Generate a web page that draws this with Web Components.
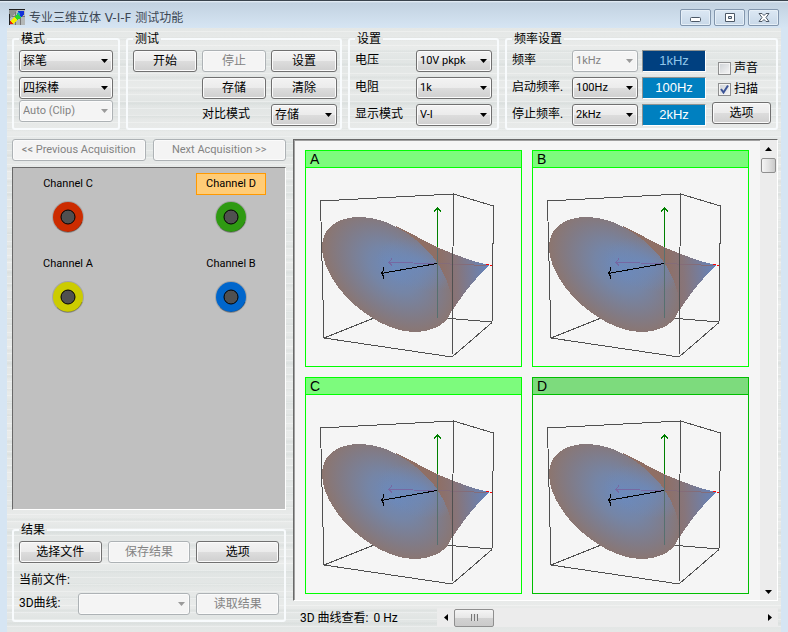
<!DOCTYPE html>
<html lang="zh-CN">
<head>
<meta charset="utf-8">
<title>专业三维立体 V-I-F 测试功能</title>
<style>
  body {
    margin: 0;
    font: 12px/16px Roboto, "Noto Sans CJK SC", sans-serif;
    color: #000;
    background: #d6e5f3;
  }

  .toolbar {
    display: grid;
    grid-template-columns: 108px 216px 151px 1fr;
    gap: 6px;
  }

  .stack { display: grid; row-gap: 5px; align-content: start; }
  .probe { --combo-font: 12px; }
  .probe > :last-child { --combo-font: 11px; margin-top: -4px; }

  .tests {
    display: grid;
    grid-template-columns: 64px 64px 66px;
    gap: 5px;
  }
  .tests .wide { grid-column: 2 / 4; --combo-font: 12px; }
  .tests .mid { grid-column: 2; }

  .freq {
    display: grid;
    grid-template-columns: 126px 64px 1fr;
    column-gap: 4px;
  }
  .extras {
    display: flex;
    flex-direction: column;
    padding: 10px 0 0 2px;
    gap: 5px;
  }

  .work {
    display: grid;
    grid-template-columns: 274px 1fr;
    gap: 7px;
    padding-top: 9px;
  }
  .side { display: flex; flex-direction: column; }
  .pager {
    display: grid;
    grid-template-columns: 1fr 1fr;
    gap: 7px;
    margin-bottom: 6px;
    font-size: 11px;
  }
  .side probe-board { margin-bottom: 12px; }

  .results { display: grid; grid-template-columns: repeat(3, 1fr); column-gap: 6px; padding-bottom: 3px; }
  .results .file { grid-column: 1 / 4; padding: 9px 0 5px; }
  .results .curve { grid-column: 1 / 3; }
</style>
</head>
<body>

<app-window caption="专业三维立体 V-I-F 测试功能">
  <div class="toolbar">
    <group-box caption="模式">
      <div class="stack probe">
        <combo-field name="探笔" value="探笔"></combo-field>
        <combo-field name="探棒" value="四探棒"></combo-field>
        <combo-field name="Auto" value="Auto (Clip)" disabled></combo-field>
      </div>
    </group-box>

    <group-box caption="测试">
      <div class="tests">
        <push-button>开始</push-button>
        <push-button disabled>停止</push-button>
        <push-button>设置</push-button>
        <push-button class="mid">存储</push-button>
        <push-button>清除</push-button>
        <combo-field class="wide" label="对比模式" value="存储" style="--combo: 66px"></combo-field>
      </div>
    </group-box>

    <group-box caption="设置">
      <div class="stack">
        <combo-field label="电压" value="10V pkpk" style="--combo: 76px"></combo-field>
        <combo-field label="电阻" value="1k" style="--combo: 76px"></combo-field>
        <combo-field label="显示模式" value="V-I" style="--combo: 76px"></combo-field>
      </div>
    </group-box>

    <group-box caption="频率设置">
      <div class="freq">
        <div class="stack">
          <combo-field label="频率" value="1kHz" style="--combo: 66px" disabled></combo-field>
          <combo-field label="启动频率." value="100Hz" style="--combo: 66px"></combo-field>
          <combo-field label="停止频率." value="2kHz" style="--combo: 66px"></combo-field>
        </div>
        <div class="stack">
          <freq-display dim>1kHz</freq-display>
          <freq-display>100Hz</freq-display>
          <freq-display>2kHz</freq-display>
        </div>
        <div class="extras">
          <check-field label="声音"></check-field>
          <check-field label="扫描" checked></check-field>
          <push-button>选项</push-button>
        </div>
      </div>
    </group-box>
  </div>

  <div class="work">
    <div class="side">
      <div class="pager">
        <push-button disabled>&lt;&lt; Previous Acquisition</push-button>
        <push-button disabled>Next Acquisition &gt;&gt;</push-button>
      </div>
      <probe-board>
        <probe-socket label="Channel C" style="--ring: #cc2c00"></probe-socket>
        <probe-socket label="Channel D" style="--ring: #2f9a12" active></probe-socket>
        <probe-socket label="Channel A" style="--ring: #cccc00"></probe-socket>
        <probe-socket label="Channel B" style="--ring: #0066cc"></probe-socket>
      </probe-board>
      <group-box caption="结果">
        <div class="results">
          <push-button>选择文件</push-button>
          <push-button disabled>保存结果</push-button>
          <push-button>选项</push-button>
          <div class="file">当前文件:</div>
          <combo-field class="curve" label="3D曲线:" value="" style="--combo: 112px" disabled></combo-field>
          <push-button disabled>读取结果</push-button>
        </div>
      </group-box>
    </div>

    <plot-viewer>
      <plot-card name="A"></plot-card>
      <plot-card name="B"></plot-card>
      <plot-card name="C"></plot-card>
      <plot-card name="D" active></plot-card>
    </plot-viewer>
  </div>
</app-window>

<script>
// Small base: attaches an open root and fills it from render()
class UiElement extends HTMLElement {
  constructor() {
    super();
    this.attachShadow({ mode: "open" });
  }

  connectedCallback() {
    this.shadowRoot.innerHTML = this.render();
  }

  attr(name) {
    return this.getAttribute(name) || "";
  }
}

class AppWindow extends UiElement {
  render() {
    return `
      <style>
        :host {
          display: flex;
          flex-direction: column;
          min-height: 100vh;
          box-sizing: border-box;
          padding: 0 7px;
          background: linear-gradient(#39434d 0, #39434d 1px, #eaf2f9 1px, #c2d2e1 3px, #d6e5f3 28px);
        }
        header {
          display: flex;
          align-items: flex-start;
          height: 28px;
        }
        .logo { margin: 9px 4px 0 2px; }
        h1 {
          flex: 1;
          margin: 9px 0 0;
          font: 12px/18px "DejaVu Sans", "Noto Sans CJK SC", sans-serif;
          color: #3b4653;
        }
        nav { display: flex; gap: 3px; padding: 9px 2px 0 0; }
        nav button {
          width: 31px;
          height: 17px;
          padding: 0;
          border: 1px solid #8296ad;
          border-radius: 2px;
          background: linear-gradient(#dce8f4, #c8d8e8);
          box-shadow: inset 0 0 0 1px #e6eff7;
        }
        nav svg { display: block; margin: auto; }
        main {
          flex: 1;
          padding: 3px 3px 0 5px;
          background:
            repeating-linear-gradient(rgba(255,255,255,0) 0 3px, rgba(255,255,255,.3) 3px 4px, rgba(255,255,255,0) 4px 7px),
            repeating-linear-gradient(rgba(190,200,198,0) 0 9px, rgba(190,200,198,.22) 10px, rgba(190,200,198,0) 13px),
            repeating-linear-gradient(#e4e7e6 0, #e9ebea 19px, #e1e5e4 31px, #e4e7e6 43px);
        }
      </style>
      <header>
        <svg class="logo" width="16" height="16" shape-rendering="crispEdges">
          <rect width="16" height="16" fill="#b4b8b8"/>
          <path d="M0 .5H16M.5 0V16" stroke="#222"/>
          <path d="M6.500 1V16M1 7.500H16M11.500 8V16" stroke="#777"/>
          <path d="M0 1H8L4 7L1 9Z" fill="#8d9191"/>
          <path d="M1 12H4V15H1Z" fill="#e02010"/>
          <path d="M2 12L5 8L9 8L8 11L4 15Z" fill="#f5ee00"/>
          <path d="M5 8L8 5L13 7L10 10L8 11Z" fill="#2bd42e"/>
          <path d="M8 5L10 2L13 6L12 8Z" fill="#16a8b8"/>
          <path d="M9 2H15V5L12 8L11 5Z" fill="#1230d8"/>
        </svg>
        <h1>${this.attr("caption")}</h1>
        <nav>
          <button aria-label="Minimize">
            <svg width="12" height="11"><rect x=".5" y="5.500" width="10" height="4" rx="1" fill="#fff" stroke="#4c5866"/></svg>
          </button>
          <button aria-label="Restore">
            <svg width="12" height="11"><path fill="#fff" fill-rule="evenodd" stroke="#4c5866" d="M1.500 1.500h9v8h-9zM4.500 4.500h3v2h-3z"/></svg>
          </button>
          <button aria-label="Close">
            <svg width="12" height="11"><path fill="#fff" stroke="#4c5866" d="M1 1.500H4L6 3.500L8 1.500H11L8 5.500L11 9.500H8L6 7.500L4 9.500H1L4 5.500Z"/></svg>
          </button>
        </nav>
      </header>
      <main><slot></slot></main>
    `;
  }
}

class GroupBox extends UiElement {
  render() {
    return `
      <style>
        :host { display: block; }
        fieldset {
          min-width: 0;
          margin: 0;
          padding: 3px 5px 2px;
          border: 2px solid #f8fbfd;
          border-radius: 3px;
          box-sizing: border-box;
          height: 100%;
        }
        legend { padding: 0 2px; line-height: 16px; }
      </style>
      <fieldset>
        <legend>${this.attr("caption")}</legend>
        <slot></slot>
      </fieldset>
    `;
  }
}

class PushButton extends UiElement {
  render() {
    return `
      <style>
        :host { display: block; }
        button {
          display: block;
          width: 100%;
          height: 22px;
          padding: 0;
          border: 1px solid #707070;
          border-radius: 3px;
          background: linear-gradient(#f3f3f3, #ebebeb 50%, #dddddd 50%, #cfcfcf);
          box-shadow: inset 0 0 0 1px #fbfbfb;
          font: inherit;
          line-height: 18px;
          white-space: nowrap;
          color: #000;
        }
        button:disabled {
          border-color: #adb2b5;
          background: #f4f4f4;
          color: #838383;
        }
      </style>
      <button ${this.hasAttribute("disabled") ? "disabled" : ""}><slot></slot></button>
    `;
  }
}

class ComboField extends UiElement {
  render() {
    const label = this.attr("label");
    return `
      <style>
        :host {
          display: flex;
          align-items: flex-start;
          justify-content: space-between;
        }
        label { white-space: nowrap; line-height: 20px; }
        .box { position: relative; width: var(--combo, 100%); }
        select {
          display: block;
          appearance: none;
          width: 100%;
          height: 22px;
          padding: 0 14px 0 3px;
          border: 1px solid #707070;
          border-radius: 3px;
          background: linear-gradient(#f3f3f3, #ebebeb 50%, #dddddd 50%, #cfcfcf);
          box-shadow: inset 0 0 0 1px #fbfbfb;
          font: inherit;
          font-size: var(--combo-font, 11px);
          color: #000;
          opacity: 1;
        }
        select:disabled {
          border-color: #adb2b5;
          background: #f4f4f4;
          color: #838383;
        }
        svg {
          position: absolute;
          right: 5px;
          top: 9px;
          pointer-events: none;
        }
        select:disabled + svg { fill: #9a9a9a; }
      </style>
      ${label ? `<label for="pick">${label}</label>` : ""}
      <div class="box">
        <select id="pick" ${label ? "" : `aria-label="${this.attr("name")}"`} ${this.hasAttribute("disabled") ? "disabled" : ""}>
          <option>${this.attr("value")}</option>
        </select>
        <svg width="7" height="4"><path d="M0 0H7L3.500 4Z"/></svg>
      </div>
    `;
  }
}

class FreqDisplay extends UiElement {
  render() {
    return `
      <style>
        :host { display: block; }
        output {
          display: block;
          height: 20px;
          border: 1px solid;
          border-color: #8f9392 #fff #fff #8f9392;
          background: #0080c0;
          color: #fff;
          font: 13px/20px "Liberation Sans", sans-serif;
          text-align: center;
        }
        :host([dim]) output { background: #004080; color: #8fc6ea; }
      </style>
      <output><slot></slot></output>
    `;
  }
}

class CheckField extends UiElement {
  render() {
    return `
      <style>
        :host { display: block; height: 16px; padding-left: 6px; }
        label { display: flex; align-items: center; gap: 3px; }
        .tick { display: grid; }
        .tick > * { grid-area: 1 / 1; }
        input {
          appearance: none;
          width: 13px;
          height: 13px;
          margin: 0;
          border: 1px solid #8e8f8f;
          background: linear-gradient(135deg, #cdd1d5, #f6f6f6);
          box-shadow: inset 0 0 0 1px #f4f4f4;
        }
        svg { visibility: hidden; pointer-events: none; }
        input:checked + svg { visibility: visible; }
      </style>
      <label>
        <span class="tick">
          <input type="checkbox" ${this.hasAttribute("checked") ? "checked" : ""}>
          <svg width="13" height="13"><path d="M3 6L5.500 9.500L10 2.500" fill="none" stroke="#3c5496" stroke-width="2"/></svg>
        </span>
        ${this.attr("label")}
      </label>
    `;
  }
}

class ProbeBoard extends UiElement {
  render() {
    return `
      <style>
        :host {
          display: grid;
          grid-template-columns: 70px 70px;
          justify-content: space-between;
          align-content: start;
          row-gap: 20px;
          box-sizing: border-box;
          min-height: 343px;
          padding: 5px 19px 5px 20px;
          border: 1px solid;
          border-color: #696969 #fff #fff #696969;
          background: #c0c0c0;
        }
      </style>
      <slot></slot>
    `;
  }
}

class ProbeSocket extends UiElement {
  render() {
    return `
      <style>
        :host {
          display: flex;
          flex-direction: column;
          align-items: center;
          gap: 6px;
        }
        span {
          box-sizing: border-box;
          width: 70px;
          border: 1px solid transparent;
          font: 11px/20px Roboto, sans-serif;
          text-align: center;
        }
        :host([active]) span { border-color: #ff9900; background: #ffcc77; }
        svg { display: block; }
      </style>
      <span>${this.attr("label")}</span>
      <svg width="32" height="32">
        <circle cx="16" cy="16" r="16" fill="#8a8a8a" opacity=".5"/>
        <circle cx="16" cy="16" r="15" fill="var(--ring)"/>
        <path d="M5 26.500A15 15 0 0 0 30 21" fill="none" stroke="#000" stroke-opacity=".25"/>
        <circle cx="16" cy="16" r="7" fill="#505050" stroke="#000"/>
      </svg>
    `;
  }
}

class PlotCard extends UiElement {
  render() {
    return `
      <style>
        :host {
          --edge: #00ff00;
          display: block;
          border: 1px solid var(--edge);
        }
        :host([active]) { --edge: #00bf00; }
        h2 {
          margin: 0;
          padding-left: 4px;
          border-bottom: 1px solid var(--edge);
          background: #7dfb7d;
          font: 14px/16px "Liberation Sans", sans-serif;
        }
        :host([active]) h2 { background: #7ddb7d; }
        svg { display: block; width: 100%; height: auto; }
      </style>
      <h2>${this.attr("name")}</h2>
      <svg viewBox="0 0 215 198" fill="none" shape-rendering="crispEdges">
        <defs>
          <radialGradient id="disk" gradientUnits="userSpaceOnUse" cx="0" cy="0" r="1"
            gradientTransform="translate(84 104) rotate(40) scale(82 54)" fx=".02" fy="-.12">
            <stop offset="0" stop-color="#6b8abd"/>
            <stop offset=".35" stop-color="#7585a6"/>
            <stop offset=".7" stop-color="#817b86"/>
            <stop offset="1" stop-color="#8e746a"/>
          </radialGradient>
          <radialGradient id="ridge" gradientUnits="userSpaceOnUse" cx="0" cy="0" r="1"
            gradientTransform="translate(114 96) rotate(14) scale(44 26)">
            <stop offset="0" stop-color="#6b8abd" stop-opacity=".85"/>
            <stop offset="1" stop-color="#6b8abd" stop-opacity="0"/>
          </radialGradient>
          <linearGradient id="tail" gradientUnits="userSpaceOnUse" x1="132" y1="100" x2="184" y2="97">
            <stop offset="0" stop-color="#8f6f65"/>
            <stop offset=".35" stop-color="#87757a"/>
            <stop offset="1" stop-color="#6385c0"/>
          </linearGradient>
        </defs>
        <!-- box behind the surface -->
        <path stroke="#505050" d="M18 170L68 150M138 150L186 154"/>
        <path stroke="#008000" d="M131.500 40V96M128 43.500L131.500 40L135 43.500"/>
        <!-- surface: cone first, open face over it -->
        <path fill="url(#tail)" d="M90 58C105 65 118 73 131 79C142 84 153 88 167 93C174 95 180 96 184 97C178 102 174 106 170 111C164 117 154 131 146 143L128 130Z"/>
        <path fill="url(#disk)" d="M16 79C16 60 31 49 54 49C82 49 108 68 124 85C138 101 147 123 146 139C145 155 127 164 107 164C84 163 61 149 41 130C26 113 16 96 16 79Z"/>
        <path fill="url(#ridge)" d="M16 79C16 60 31 49 54 49C82 49 108 68 124 85C138 101 147 123 146 139C145 155 127 164 107 164C84 163 61 149 41 130C26 113 16 96 16 79Z"/>
        <path stroke="#56706f" d="M131.500 80V150"/>
        <path stroke="#7668a2" d="M131 95.500L83 94.500M86 90.500L83 94.500L86 97.500"/>
        <path stroke="#846c78" d="M132 95.500L180 97.500"/>
        <path stroke="#ff0000" d="M180 96.500H183M184 97.500H187"/>
        <path stroke="#000" d="M131 95.500L75 105.500M77.500 99V102L75.500 105.500L77.500 108V111"/>
        <!-- near edges of the box -->
        <path stroke="#505050" d="M18 170L14.500 33L147.500 26L187.500 38L186 154.500L146 189L18 170M147.500 26L146 189"/>
      </svg>
    `;
  }
}

class PlotViewer extends UiElement {
  render() {
    return `
      <style>
        :host { display: flex; flex-direction: column; min-width: 0; }
        .view {
          display: grid;
          grid-template-columns: 1fr 17px;
          border: 1px solid;
          border-color: #696969 #fff #fff #696969;
          box-shadow: inset 1px 1px #a0a0a0;
          background: #f5f5f5;
        }
        .grid {
          display: grid;
          grid-template-columns: 1fr 1fr;
          gap: 10px;
          padding: 10px 11px 6px 11px;
        }
        .bar {
          display: flex;
          flex-direction: column;
          justify-content: space-between;
          background: #ececec;
        }
        button {
          display: grid;
          place-items: center;
          width: 17px;
          height: 17px;
          padding: 0;
          border: 0;
          background: none;
        }
        .thumb {
          flex: none;
          box-sizing: border-box;
          width: 15px;
          height: 15px;
          margin: 1px;
          border: 1px solid #8f8f8f;
          border-radius: 2px;
          background: linear-gradient(90deg, #f5f5f5, #e2e2e2 50%, #c9c9c9);
        }
        .track { flex: 1; }
        footer {
          display: grid;
          grid-template-columns: 144px 17px 1fr 17px;
          align-items: center;
          padding-top: 7px;
        }
        footer label { padding-left: 7px; line-height: 18px; white-space: nowrap; }
        footer label output { padding-left: 2px; }
        footer button, footer input { background: #ececec; }
        footer button { height: 19px; }
        input {
          appearance: none;
          min-width: 0;
          width: 100%;
          height: 19px;
          margin: 0;
        }
        input::-webkit-slider-thumb {
          appearance: none;
          box-sizing: border-box;
          width: 40px;
          height: 18px;
          border: 1px solid #8f8f8f;
          border-radius: 2px;
          background:
            repeating-linear-gradient(90deg, #777 0 1px, #ddd 1px 3px) center / 7px 7px no-repeat,
            linear-gradient(#f5f5f5, #e6e6e6 50%, #d2d2d2 50%, #cacaca);
        }
      </style>
      <div class="view">
        <div class="grid"><slot></slot></div>
        <div class="bar">
          <button aria-label="Up"><svg width="7" height="4"><path d="M0 4H7L3.500 0Z"/></svg></button>
          <div class="thumb"></div>
          <div class="track"></div>
          <button aria-label="Down"><svg width="7" height="4"><path d="M0 0H7L3.500 4Z"/></svg></button>
        </div>
      </div>
      <footer>
        <label for="hz">3D 曲线查看: <output>0 Hz</output></label>
        <button aria-label="Left"><svg width="4" height="7"><path d="M4 0V7L0 3.500Z"/></svg></button>
        <input id="hz" type="range" min="0" max="100" value="0">
        <button aria-label="Right"><svg width="4" height="7"><path d="M0 0V7L4 3.500Z"/></svg></button>
      </footer>
    `;
  }
}

customElements.define("app-window", AppWindow);
customElements.define("group-box", GroupBox);
customElements.define("push-button", PushButton);
customElements.define("combo-field", ComboField);
customElements.define("freq-display", FreqDisplay);
customElements.define("check-field", CheckField);
customElements.define("probe-board", ProbeBoard);
customElements.define("probe-socket", ProbeSocket);
customElements.define("plot-card", PlotCard);
customElements.define("plot-viewer", PlotViewer);
</script>
</body>
</html>
